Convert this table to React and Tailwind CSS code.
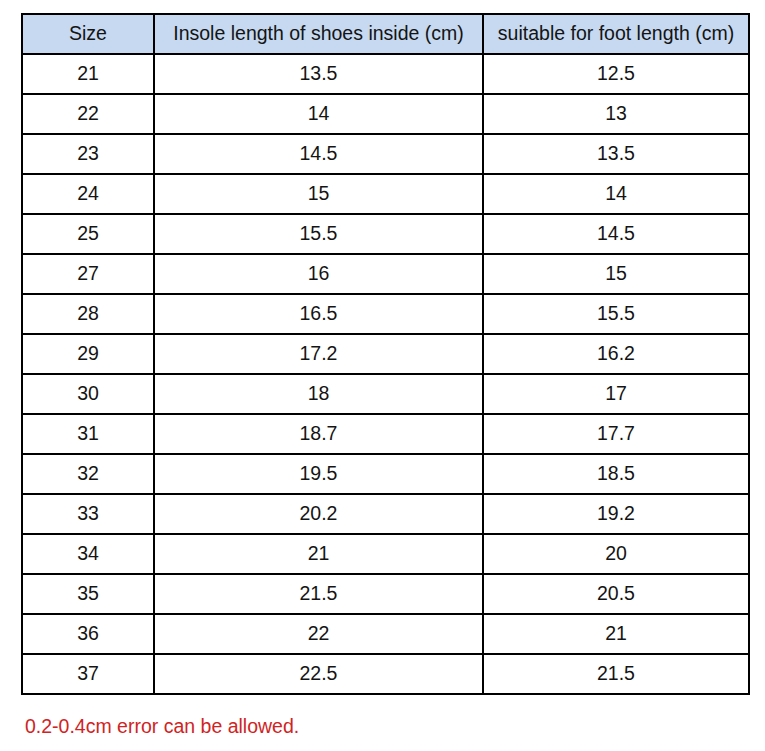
const ROWS = [
  ['21', '13.5', '12.5'],
  ['22', '14', '13'],
  ['23', '14.5', '13.5'],
  ['24', '15', '14'],
  ['25', '15.5', '14.5'],
  ['27', '16', '15'],
  ['28', '16.5', '15.5'],
  ['29', '17.2', '16.2'],
  ['30', '18', '17'],
  ['31', '18.7', '17.7'],
  ['32', '19.5', '18.5'],
  ['33', '20.2', '19.2'],
  ['34', '21', '20'],
  ['35', '21.5', '20.5'],
  ['36', '22', '21'],
  ['37', '22.5', '21.5'],
];

const cell = 'border-2 border-black text-center h-[40px] p-0 leading-none';

export default function App() {
  return (
    <div className="bg-white w-[765px] h-[751px] pt-[13px] pl-[21px] font-['Liberation_Sans',Arial,sans-serif] text-[19.5px] text-[#141414]">
      <table className="border-collapse table-fixed w-[727px]">
        <colgroup>
          <col className="w-[132px]" />
          <col className="w-[329px]" />
          <col className="w-[266px]" />
        </colgroup>
        <thead>
          <tr className="bg-[#c6d9f0]">
            <th className={`${cell} font-normal`}>Size</th>
            <th className={`${cell} font-normal`}>Insole length of shoes inside (cm)</th>
            <th className={`${cell} font-normal`}>suitable for foot length (cm)</th>
          </tr>
        </thead>
        <tbody>
          {ROWS.map(r => (
            <tr key={r[0]}>
              <td className={cell}>{r[0]}</td>
              <td className={cell}>{r[1]}</td>
              <td className={cell}>{r[2]}</td>
            </tr>
          ))}
        </tbody>
      </table>
      <p className="mt-[22px] pl-[4px] text-[#d02424] leading-none">0.2-0.4cm error can be allowed.</p>
    </div>
  );
}
